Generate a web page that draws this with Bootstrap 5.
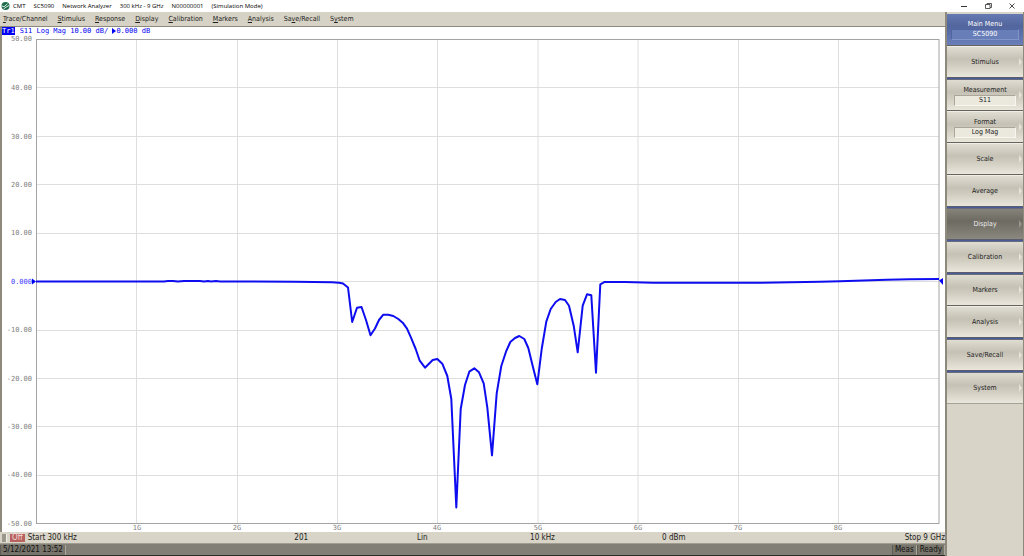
<!DOCTYPE html>
<html lang="en">
<head>
<meta charset="utf-8">
<meta name="viewport" content="width=device-width, initial-scale=1">
<title>Network Analyzer</title>
<link href="https://cdn.jsdelivr.net/npm/bootstrap@5.3.0/dist/css/bootstrap.min.css" rel="stylesheet">
<style>
body{font-family:"DejaVu Sans Condensed","DejaVu Sans",sans-serif;font-stretch:condensed;font-size:7px;line-height:10px;color:#222;background:#d6d2c5}
.titlebar{height:12px;background:#fff;font-family:"Open Sans",sans-serif;font-stretch:normal;font-size:6px;color:#000;padding-left:1px}
.titlebar .fields{gap:8px;padding-left:3px}
.winbtn{width:24px;height:12px;border:0;background:none;padding:0;line-height:1}
.menubar{height:14px;padding-left:3px;gap:10px}
.menubar a,.menubar a:hover{color:#222;text-decoration:none}
.plotpane{background:#fff;border-left:2px solid #8d897d;border-top:1px solid #8d897d}
.tracehead{position:absolute;left:0;top:0;font-family:"DejaVu Sans Mono",monospace;color:#0000f5;line-height:8px}
.tracetag{background:#0000f5;color:#fff;margin-right:5px}
.plotpane svg text{font-family:"DejaVu Sans Mono",monospace;font-size:7px;fill:#808080}
.chanbar{height:11px;padding-left:2px;font-size:8px;background:#d8d4c7}
.col-start{width:31%}
.col-mid{width:13%}
.col-wide{width:14%}
.col-slim{width:12%}
.offtag{background:#b8625f;color:#f3dcda;padding:0 2px;line-height:8px;margin:0 3px}
.grip{width:5px;height:8px;background:#9b978b;border-right:1px solid #eee}
.statusbar{height:12px;background:#827f77;border-top:1px solid #a09c8f;color:#111;font-size:8px}
.statusbar .cell{background:#77746b;border-right:1px solid #aaa79d;border-left:1px solid #5f5d56;padding:0 2px;line-height:10px}
.bottomedge{height:3px;background:#2b2e26}
.sidebar{width:79px;border-left:2px solid #8d897d;border-right:1px solid #8d897d;padding-top:2px;background:#d8d4c8}
.softkey{display:flex;flex-direction:column;align-items:center;justify-content:center;position:relative;width:100%;height:30px;border:0;padding:0;margin-bottom:2px;color:#222;line-height:10px;background:linear-gradient(#dfdcd1,#c5c1b5 40%,#d0ccc0 60%,#e9e6db);box-shadow:0 1px #66645c,0 2px #efede5}
.softkey.sep{margin-bottom:3px;box-shadow:0 1px #5b5d6c,0 2px #465c9c,0 3px #686b79}
.softkey.last{box-shadow:0 1px #a5a196}
.softkey::after{content:"";position:absolute;right:1px;top:11px;border-left:3px solid #e6e3d9;border-top:4px solid transparent;border-bottom:4px solid transparent}
.softkey.active{color:#eee;background:linear-gradient(#86837a,#6d6a62 40%,#77746b 60%,#8b887f)}
.softkey.active::after{border-left-color:#99968d}
.softkey.heading{height:31px;color:#fff;background:linear-gradient(#6579b2,#52659d 40%,#5a6ea9 60%,#6a7fba)}
.softkey.heading::after{display:none}
.keyvalue{width:62px;background:#ebe8dd;border:1px solid #aaa699;border-right-color:#f8f6ee;border-bottom-color:#f8f6ee;line-height:9px}
.heading .keyvalue{width:68px;background:#687eb9;border-color:#5064a0 #8295c7 #8295c7 #5064a0}
</style>
<script src="https://cdn.jsdelivr.net/npm/bootstrap@5.3.0/dist/js/bootstrap.bundle.min.js"></script>
</head>
<body>
<header class="titlebar d-flex align-items-center">
  <svg width="9" height="10" viewBox="0 0 9 10" aria-hidden="true"><circle cx="4.5" cy="5" r="4" fill="#1f6b4c"/><path d="M.8 4.8 3 5.8 6.5 2.8M2.5 8 5 6.2 8 4.5" fill="none" stroke="#d4ebe0" stroke-width="1"/></svg>
  <div class="fields d-flex flex-grow-1"><span>CMT</span><span>SC5090</span><span>Network Analyzer</span><span>300 kHz - 9 GHz</span><span>N00000001</span><span>(Simulation Mode)</span></div>
  <button class="winbtn" aria-label="Minimize"><svg width="6" height="6" viewBox="0 0 6 6"><path d="M0 3.500h6" stroke="#333"/></svg></button>
  <button class="winbtn" aria-label="Restore"><svg width="7" height="6" viewBox="0 0 7 6"><path d="M.5 1.500h4.500v4H.5zM2 1.500V.5h4.500v4H5" fill="none" stroke="#333" stroke-width=".8"/></svg></button>
  <button class="winbtn" aria-label="Close"><svg width="6" height="6" viewBox="0 0 6 6"><path d="M.5.5l5 5M5.500.5l-5 5" stroke="#333" stroke-width=".9"/></svg></button>
</header>
<div class="d-flex">
  <main class="flex-grow-1" style="min-width:0">
    <nav class="menubar d-flex align-items-center">
      <a href="#"><u>T</u>race/Channel</a><a href="#"><u>S</u>timulus</a><a href="#"><u>R</u>esponse</a><a href="#"><u>D</u>isplay</a><a href="#"><u>C</u>alibration</a><a href="#"><u>M</u>arkers</a><a href="#"><u>A</u>nalysis</a><a href="#">Sa<u>v</u>e/Recall</a><a href="#">S<u>y</u>stem</a>
    </nav>
    <section class="plotpane position-relative">
      <div class="tracehead"><span class="tracetag">Tr1</span>S11 Log Mag 10.00 dB/ <svg width="4" height="6" viewBox="0 0 4 6"><path d="M0 0l4 3-4 3z" fill="#0000f5"/></svg>0.000 dB</div>
      <svg class="d-block w-100" viewBox="2 27 943 505" role="img" aria-label="S11 log magnitude from 300 kHz to 9 GHz">
        <path d="M36 87.500H939M36 136.500H939M36 184.500H939M36 233.500H939M36 281.500H939M36 330.500H939M36 378.500H939M36 426.500H939M36 475.500H939M136.500 39V523M237.500 39V523M337.500 39V523M437.500 39V523M538 39V523M638 39V523M738.500 39V523M838.500 39V523" stroke="#dedede" fill="none"/>
        <rect x="36.500" y="39.500" width="902.500" height="484" fill="none" stroke="#a3a3a3"/>
        <g text-anchor="end">
          <text x="32" y="41">50.00</text><text x="32" y="90">40.00</text><text x="32" y="139">30.00</text><text x="32" y="187">20.00</text><text x="32" y="235">10.00</text><text x="32" y="284" style="fill:#4040ff">0.000</text><text x="32" y="332">-10.00</text><text x="32" y="381">-20.00</text><text x="32" y="429">-30.00</text><text x="32" y="477">-40.00</text><text x="32" y="526">-50.00</text>
        </g>
        <g text-anchor="middle">
          <text x="137" y="530">1G</text><text x="237" y="530">2G</text><text x="337" y="530">3G</text><text x="437" y="530">4G</text><text x="538" y="530">5G</text><text x="638" y="530">6G</text><text x="738" y="530">7G</text><text x="838" y="530">8G</text>
        </g>
        <path d="M32 278.500l4 3-4 3zM943 278v7l-4-4.500z" fill="#0000f5"/>
        <polyline fill="none" stroke="#0d0df0" stroke-width="2" stroke-linejoin="round" points="36,281.500 164,281.500 168,281 173,281 178,281.500 184,281 200,281 204,281.500 208,281 211,281.500 216,281 220,281.500 295,281.700 332,282.300 339,282.700 343,283.500 348,287.500 352.200,322 357,307.700 361.500,307 366,320 370.500,335.300 375,328.500 379,320 383.300,314.700 388.300,314.700 393.300,316 398.300,319 402.700,322.700 407,328.700 411,337.700 415.700,349 419.700,360.700 425,367.700 432.700,360 437.300,359 442.300,363.700 447.300,376 451.300,399 456.300,507.500 460.700,409 465,385 469.300,371.700 474.300,368.300 479,372.300 483.700,383.300 487.300,407.300 492,455.300 496.700,393.300 501.300,366 506,351.700 510.300,342 515,338 519.300,336 524.300,339 528.300,348 532.700,366 537.300,384.300 541.700,349 546.300,321.700 550.700,309 555.700,302 560,299 565,300 569,305.700 573.700,325.700 577.700,352.300 582.700,305.700 587,294.300 591.300,295.300 596,372.700 600.300,284.300 604.700,281.900 625,282 653,282.800 760,282.800 820,281.700 840,281.300 887,279.700 910,279.200 939,279"/>
      </svg>
    </section>
    <div class="chanbar d-flex align-items-center text-nowrap">
      <div class="col-start d-flex align-items-center"><span class="grip"></span><span class="offtag">Off</span>Start 300 kHz</div>
      <div class="col-mid">201</div><div class="col-slim">Lin</div><div class="col-wide">10 kHz</div><div class="col-mid">0 dBm</div>
      <div class="ms-auto">Stop 9 GHz</div>
    </div>
    <div class="statusbar d-flex align-items-center"><span class="cell">5/12/2021 13:52</span><span class="cell ms-auto">Meas</span><span class="cell">Ready</span></div>
    <div class="bottomedge"></div>
  </main>
  <aside class="sidebar flex-shrink-0">
    <button class="softkey heading">Main Menu<span class="keyvalue">SC5090</span></button>
    <button class="softkey sep">Stimulus</button>
    <button class="softkey">Measurement<span class="keyvalue">S11</span></button>
    <button class="softkey">Format<span class="keyvalue">Log Mag</span></button>
    <button class="softkey">Scale</button>
    <button class="softkey sep">Average</button>
    <button class="softkey sep active">Display</button>
    <button class="softkey sep">Calibration</button>
    <button class="softkey">Markers</button>
    <button class="softkey sep">Analysis</button>
    <button class="softkey sep">Save/Recall</button>
    <button class="softkey last">System</button>
  </aside>
</div>
</body>
</html>
